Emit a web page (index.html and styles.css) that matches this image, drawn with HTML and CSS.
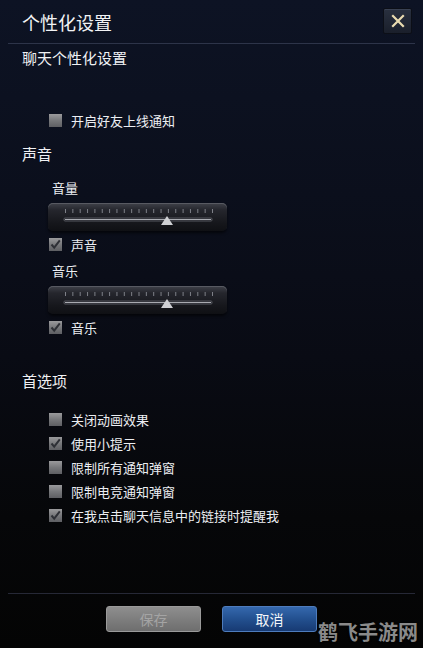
FILE: index.html
```html
<!DOCTYPE html>
<html lang="zh-CN">
<head>
  <meta charset="UTF-8" />
  <title>个性化设置</title>
  <link rel="stylesheet" href="styles.css">
</head>
<body>
<div class="dialog">
  <header class="head">
    <h1>个性化设置</h1>
    <button class="close" aria-label="关闭">
      <svg width="14" height="14" viewBox="0 0 14 14"><path d="M2 2 L12 12 M12 2 L2 12" stroke="#eadcb0" stroke-width="2.2" stroke-linecap="square"/></svg>
    </button>
  </header>

  <h2 class="sect first">聊天个性化设置</h2>
  <label class="opt mt-chat"><span class="box"></span>开启好友上线通知</label>

  <h2 class="sect mt-sound">声音</h2>
  <div class="sub mt-vol">音量</div>
  <div class="slider">
    <svg width="179" height="28" viewBox="0 0 179 28">
      <g stroke="#7e8088" stroke-width="1"></g>
      <rect x="16" y="15" width="148" height="3" rx="1" fill="#1a1b20" stroke="#55575e"/>
      <line x1="17" y1="16.5" x2="163" y2="16.5" stroke="#a9abb1"/>
      <path d="M119 13 L125 22 L113 22 Z" fill="#cfd0d4"/>
    </svg>
  </div>
  <label class="opt mt-chk"><span class="box on"></span>声音</label>

  <div class="sub mt-music">音乐</div>
  <div class="slider">
    <svg width="179" height="28" viewBox="0 0 179 28">
      <g stroke="#7e8088" stroke-width="1"></g>
      <rect x="16" y="15" width="148" height="3" rx="1" fill="#1a1b20" stroke="#55575e"/>
      <line x1="17" y1="16.5" x2="163" y2="16.5" stroke="#a9abb1"/>
      <path d="M119 13 L125 22 L113 22 Z" fill="#cfd0d4"/>
    </svg>
  </div>
  <label class="opt mt-chk"><span class="box on"></span>音乐</label>

  <h2 class="sect mt-pref">首选项</h2>
  <div class="list">
    <label class="opt"><span class="box"></span>关闭动画效果</label>
    <label class="opt"><span class="box on"></span>使用小提示</label>
    <label class="opt"><span class="box"></span>限制所有通知弹窗</label>
    <label class="opt"><span class="box"></span>限制电竞通知弹窗</label>
    <label class="opt"><span class="box on"></span>在我点击聊天信息中的链接时提醒我</label>
  </div>

  <footer class="foot">
    <button class="btn save" disabled>保存</button>
    <button class="btn cancel">取消</button>
  </footer>
  <div class="mark">鹤飞手游网</div>
</div>

<script>
// ticks on the sliders
document.querySelectorAll('.slider svg').forEach(svg => {
  const g = svg.querySelector('g');
  let html = '';
  for (let i = 0; i < 21; i++) {
    const x = 17.5 + i * 7.35;
    html += `<line x1="${x}" y1="6" x2="${x}" y2="10"/>`;
  }
  g.innerHTML = html;
});
// checkmarks
document.querySelectorAll('.box.on').forEach(b => {
  b.innerHTML = '<svg width="13" height="13" viewBox="0 0 13 13"><path d="M2.5 6.5 L5.2 9.6 L10.8 2.4" fill="none" stroke="#2e3036" stroke-width="2"/></svg>';
});
</script>
</body>
</html>
```

FILE: styles.css
```css
* { box-sizing: border-box; }
body { margin: 0; background: #050506; font-family: "Noto Sans CJK SC", "Noto Sans", sans-serif; color: #eceef2; }
.dialog { position: relative; width: 423px; height: 648px; display: flex; flex-direction: column;
  background: linear-gradient(180deg, #0d1324 0%, #0b0f1c 30%, #090b14 55%, #060709 80%, #040404 100%); }

.head { display: flex; align-items: center; justify-content: space-between; height: 44px; margin: 0 8px;
  padding: 0 3px 0 14px; border-bottom: 1px solid #2d3449; }
.head h1 { margin: 0; font-size: 18px; font-weight: normal; line-height: 24px; color: #f2f3f5; }
.close { width: 29px; height: 26px; margin-top: -2px; padding: 0; display: flex; align-items: center; justify-content: center;
  background: linear-gradient(180deg, #29303f, #1a1f2b); border: 1px solid #0c0f17; border-radius: 2px;
  box-shadow: inset 0 1px 0 #394153; }

.sect { margin: 0; padding-left: 22px; font-size: 15px; font-weight: normal; line-height: 20px; color: #f0f1f4; }
.first { margin-top: 4px; }
.mt-sound { margin-top: 14px; }
.mt-pref { margin-top: 34px; }

.sub { padding-left: 52px; font-size: 13px; line-height: 18px; color: #eceef2; }
.mt-vol { margin-top: 15px; }
.mt-music { margin-top: 8px; }

.slider { width: 179px; height: 28px; margin: 6px 0 0 48px; border-radius: 5px;
  background: linear-gradient(180deg, #40424a 0%, #25262d 25%, #16171c 70%, #0f1014 100%);
  box-shadow: inset 0 1px 0 #585a62, 0 2px 3px rgba(0,0,0,0.6); }
.slider svg { display: block; }

.opt { display: flex; align-items: center; gap: 9px; height: 20px; padding-left: 49px; font-size: 13px; color: #eceef2; }
.mt-chat { margin-top: 42px; }
.mt-chk { margin-top: 3px; }
.box { width: 13px; height: 13px; flex: none; display: block;
  background: linear-gradient(180deg, #9a9a9c 0%, #77787b 50%, #5e5f63 100%); }
.box svg { display: block; }

.list { display: flex; flex-direction: column; gap: 4px; margin-top: 18px; }

.foot { margin: auto 8px 0; height: 55px; border-top: 1px solid #262836; display: flex; justify-content: center;
  align-items: flex-start; gap: 21px; padding-top: 12px; }
.btn { width: 95px; height: 26px; border-radius: 3px; font-family: inherit; font-size: 14px; line-height: 22px; padding: 0; }
.save { color: #a4a4a4; border: 1px solid #9a9a9a; background: linear-gradient(180deg, #8e8e8e, #6e6e6e); }
.cancel { color: #f4f6fa; border: 1px solid #4e7cbc; background: linear-gradient(180deg, #3568ad 0%, #23508f 50%, #173a73 100%); }

.mark { position: absolute; right: 5px; bottom: 2px; font-size: 20px; font-weight: bold; color: #8a8a8a;
  text-shadow: 0 0 2px #000; }
```
